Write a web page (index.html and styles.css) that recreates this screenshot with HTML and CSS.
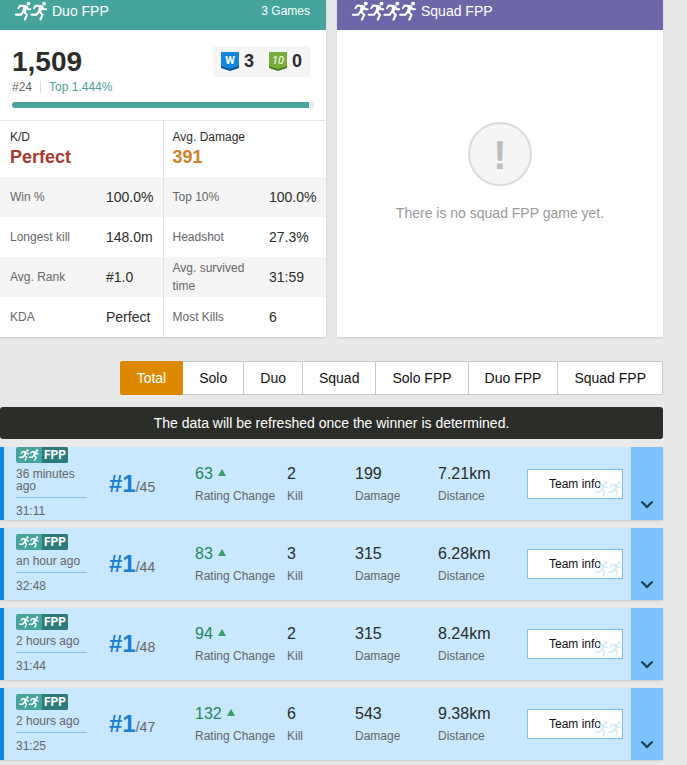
FILE: index.html
```
<!DOCTYPE html>
<html lang="en">
<head>
    <meta charset="UTF-8">
    <meta name="viewport" content="width=device-width, initial-scale=1.0">
    <title>Player stats</title>
    <link rel="stylesheet" href="styles.css">
</head>
<body>
    <!-- Shared icons -->
    <svg class="sprite" aria-hidden="true">
        <symbol id="runner" viewBox="0 0 18 20">
            <circle cx="15" cy="2.4" r="2" fill="currentColor"/>
            <path fill="currentColor" d="M8 4L13.6 4.4L14.2 6.4L12 10.8L11 12.4L8.4 11.4L9.6 6.6Z"/>
            <g fill="none" stroke="currentColor" stroke-linecap="round" stroke-linejoin="round">
                <path stroke-width="1.9" d="M4.5 7.2L6.4 4.4L11.5 4.8"/>
                <path stroke-width="1.9" d="M13.2 5.6L14.4 8.2H17"/>
                <path stroke-width="2.2" d="M9.4 10.8L7.2 13.8H2"/>
                <path stroke-width="2.2" d="M10.4 11L13.4 13.8L11.2 18.8"/>
            </g>
        </symbol>
        <symbol id="duo" viewBox="0 0 35 20">
            <use href="#runner" width="18" height="20"/>
            <use href="#runner" x="16" width="18" height="20"/>
        </symbol>
        <symbol id="squad" viewBox="0 0 67 20">
            <use href="#runner" width="18" height="20"/>
            <use href="#runner" x="16" width="18" height="20"/>
            <use href="#runner" x="32" width="18" height="20"/>
            <use href="#runner" x="48" width="18" height="20"/>
        </symbol>
        <symbol id="arrow" viewBox="0 0 14 10">
            <path d="M1.5 1.5L7 7L12.5 1.5" fill="none" stroke="#24435c" stroke-width="2.4"/>
        </symbol>
    </svg>

    <main class="page">
        <div class="cards">
            <!-- Duo FPP -->
            <section class="card">
                <header class="card-head duo">
                    <svg class="icon-duo" aria-hidden="true"><use href="#duo"/></svg>
                    <span>Duo FPP</span>
                    <span class="games">3 Games</span>
                </header>
                <div class="overview">
                    <div class="rating">
                        <strong class="score">1,509</strong>
                        <div class="medals">
                            <svg class="shield" viewBox="0 0 18 19" role="img" aria-label="Wins">
                                <path fill="#0b4f94" d="M0 10H18V16L9 19L0 16Z"/>
                                <path fill="#1487dd" d="M0 0H18V14L9 17L0 14Z"/>
                                <text class="shield-w" x="9" y="12" text-anchor="middle">W</text>
                            </svg>
                            <b>3</b>
                            <svg class="shield" viewBox="0 0 18 19" role="img" aria-label="Top 10">
                                <path fill="#4d7a20" d="M0 10H18V16L9 19L0 16Z"/>
                                <path fill="#78ac3d" d="M0 0H18V14L9 17L0 14Z"/>
                                <text class="shield-ten" x="9" y="12" text-anchor="middle">10</text>
                            </svg>
                            <b>0</b>
                        </div>
                    </div>
                    <div class="ranking">
                        <span>#24</span>
                        <span class="top">Top 1.444%</span>
                    </div>
                    <div class="bar"><div class="bar-fill" style="width: 98.5%"></div></div>
                </div>
                <table class="stats">
                    <colgroup>
                        <col class="col-label"><col><col class="col-label"><col>
                    </colgroup>
                    <tbody>
                        <tr class="main-stats">
                            <td colspan="2">K/D<strong class="red">Perfect</strong></td>
                            <td colspan="2" class="split">Avg. Damage<strong class="orange">391</strong></td>
                        </tr>
                        <tr>
                            <th>Win %</th><td>100.0%</td>
                            <th class="split">Top 10%</th><td>100.0%</td>
                        </tr>
                        <tr>
                            <th>Longest kill</th><td>148.0m</td>
                            <th class="split">Headshot</th><td>27.3%</td>
                        </tr>
                        <tr>
                            <th>Avg. Rank</th><td>#1.0</td>
                            <th class="split">Avg. survived time</th><td>31:59</td>
                        </tr>
                        <tr>
                            <th>KDA</th><td>Perfect</td>
                            <th class="split">Most Kills</th><td>6</td>
                        </tr>
                    </tbody>
                </table>
            </section>

            <!-- Squad FPP -->
            <section class="card">
                <header class="card-head squad">
                    <svg class="icon-squad" aria-hidden="true"><use href="#squad"/></svg>
                    <span>Squad FPP</span>
                </header>
                <div class="empty">
                    <div class="empty-icon">!</div>
                    <p>There is no squad FPP game yet.</p>
                </div>
            </section>
        </div>

        <nav class="tabs">
            <button type="button" class="active">Total</button>
            <button type="button">Solo</button>
            <button type="button">Duo</button>
            <button type="button">Squad</button>
            <button type="button">Solo FPP</button>
            <button type="button">Duo FPP</button>
            <button type="button">Squad FPP</button>
        </nav>

        <p class="notice">The data will be refreshed once the winner is determined.</p>

        <!-- Match history -->
        <div class="matches">
            <article class="match">
                <div class="when">
                    <div class="mode"><svg aria-hidden="true"><use href="#duo"/></svg><span>FPP</span></div>
                    <div class="ago">36 minutes ago</div>
                    <div class="length">31:11</div>
                </div>
                <div class="rank"><strong>#1</strong>/45</div>
                <div class="stat up"><b>63 <i></i></b>Rating Change</div>
                <div class="stat"><b>2</b>Kill</div>
                <div class="stat"><b>199</b>Damage</div>
                <div class="stat"><b>7.21km</b>Distance</div>
                <button type="button" class="team">Team info<svg aria-hidden="true"><use href="#duo"/></svg></button>
                <button type="button" class="toggle" aria-label="Show details"><svg><use href="#arrow"/></svg></button>
            </article>
            <article class="match">
                <div class="when">
                    <div class="mode"><svg aria-hidden="true"><use href="#duo"/></svg><span>FPP</span></div>
                    <div class="ago">an hour ago</div>
                    <div class="length">32:48</div>
                </div>
                <div class="rank"><strong>#1</strong>/44</div>
                <div class="stat up"><b>83 <i></i></b>Rating Change</div>
                <div class="stat"><b>3</b>Kill</div>
                <div class="stat"><b>315</b>Damage</div>
                <div class="stat"><b>6.28km</b>Distance</div>
                <button type="button" class="team">Team info<svg aria-hidden="true"><use href="#duo"/></svg></button>
                <button type="button" class="toggle" aria-label="Show details"><svg><use href="#arrow"/></svg></button>
            </article>
            <article class="match">
                <div class="when">
                    <div class="mode"><svg aria-hidden="true"><use href="#duo"/></svg><span>FPP</span></div>
                    <div class="ago">2 hours ago</div>
                    <div class="length">31:44</div>
                </div>
                <div class="rank"><strong>#1</strong>/48</div>
                <div class="stat up"><b>94 <i></i></b>Rating Change</div>
                <div class="stat"><b>2</b>Kill</div>
                <div class="stat"><b>315</b>Damage</div>
                <div class="stat"><b>8.24km</b>Distance</div>
                <button type="button" class="team">Team info<svg aria-hidden="true"><use href="#duo"/></svg></button>
                <button type="button" class="toggle" aria-label="Show details"><svg><use href="#arrow"/></svg></button>
            </article>
            <article class="match">
                <div class="when">
                    <div class="mode"><svg aria-hidden="true"><use href="#duo"/></svg><span>FPP</span></div>
                    <div class="ago">2 hours ago</div>
                    <div class="length">31:25</div>
                </div>
                <div class="rank"><strong>#1</strong>/47</div>
                <div class="stat up"><b>132 <i></i></b>Rating Change</div>
                <div class="stat"><b>6</b>Kill</div>
                <div class="stat"><b>543</b>Damage</div>
                <div class="stat"><b>9.38km</b>Distance</div>
                <button type="button" class="team">Team info<svg aria-hidden="true"><use href="#duo"/></svg></button>
                <button type="button" class="toggle" aria-label="Show details"><svg><use href="#arrow"/></svg></button>
            </article>
        </div>
    </main>
</body>
</html>
```

FILE: styles.css
```
* {
    box-sizing: border-box;
}
body {
    margin: 0;
    background: #e9e9e9;
    color: #2b2d29;
    font-family: "Liberation Sans", Arial, sans-serif;
    font-size: 14px;
}
button {
    font: inherit;
    cursor: pointer;
}
.sprite {
    display: block;
    width: 0;
    height: 0;
}
.page {
    margin-right: 24px;
    padding-bottom: 5px;
}

/* Season cards */
.cards {
    display: grid;
    grid-template-columns: 1fr 1fr;
    gap: 11px;
}
.card {
    display: flex;
    flex-direction: column;
    background: #fff;
    box-shadow: 0 1px 2px rgba(0, 0, 0, 0.15);
}
.card-head {
    display: flex;
    align-items: center;
    gap: 4px;
    padding: 0 16px 8px 14px;
    line-height: 22px;
    color: #fff;
}
.duo {
    background: #45a59d;
}
.squad {
    background: #6d67a8;
}
.icon-duo {
    width: 34px;
    height: 20px;
}
.icon-squad {
    width: 66px;
    height: 20px;
}
.games {
    margin-left: auto;
    font-size: 12px;
}
.overview {
    padding: 16px 12px 12px;
    border-bottom: 1px solid #e6e6e6;
}
.rating {
    display: flex;
    align-items: center;
    justify-content: space-between;
    padding-right: 4px;
}
.score {
    font-size: 28px;
    line-height: 31px;
}
.medals {
    display: flex;
    align-items: center;
    gap: 5px;
    padding: 0 8px;
    line-height: 31px;
    background: #f5f5f5;
}
.medals b {
    font-size: 18px;
}
.medals b + .shield {
    margin-left: 10px;
}
.shield {
    width: 18px;
    height: 19px;
    fill: #fff;
}
.shield-w {
    font: bold 11px Roboto, sans-serif;
}
.shield-ten {
    font: italic 11px Roboto, sans-serif;
}
.ranking {
    display: flex;
    align-items: center;
    gap: 8px;
    line-height: 20px;
    font-size: 12px;
    color: #666;
}
.top {
    padding-left: 8px;
    border-left: 1px solid #ddd;
    line-height: 12px;
    color: #4a9f98;
}
.bar {
    height: 6px;
    margin-top: 5px;
    border-radius: 3px;
    background: #e9e9e9;
    overflow: hidden;
}
.bar-fill {
    height: 6px;
    background: #45a59d;
}
.stats {
    width: 100%;
    table-layout: fixed;
    border-collapse: collapse;
}
.col-label {
    width: 106px;
}
.stats th, .stats td {
    height: 40px;
    padding: 0;
    text-align: left;
}
.stats th {
    padding: 0 10px;
    font-size: 12px;
    font-weight: normal;
    line-height: 18px;
    color: #666;
}
.stats tr:nth-child(even) {
    background: #f5f5f5;
}
.stats .main-stats td {
    padding: 8px 10px;
    font-size: 12px;
    line-height: 16px;
}
.stats tr .split, .stats .main-stats .split {
    border-left: 1px solid #e3e3e3;
    padding-left: 9px;
}
.main-stats strong {
    display: block;
    font-size: 18px;
    line-height: 24px;
}
.red {
    color: #a93a2e;
}
.orange {
    color: #d0812c;
}
.empty {
    flex: 1;
    display: flex;
    flex-direction: column;
    align-items: center;
    justify-content: center;
    gap: 16px;
    padding-bottom: 22px;
    color: #999;
}
.empty p {
    margin: 0;
    line-height: 22px;
}
.empty-icon {
    width: 64px;
    height: 64px;
    border: 2px solid #dbdbdb;
    border-radius: 50%;
    background: #f5f5f5;
    color: #bdbdbd;
    font-size: 40px;
    font-weight: bold;
    line-height: 62px;
    text-align: center;
}

/* Mode tabs */
.tabs {
    display: flex;
    justify-content: flex-end;
    margin-top: 24px;
}
.tabs button {
    height: 34px;
    padding: 0 16px;
    border: 1px solid #c8c8c8;
    border-left-width: 0;
    background: #fff;
    color: #111;
}
.tabs .active {
    border: 1px solid #dc8900;
    border-radius: 2px 0 0 2px;
    background: #dc8900;
    color: #fff;
}
.tabs button:last-child {
    border-radius: 0 2px 2px 0;
}
.notice {
    margin: 12px 0 8px;
    border-radius: 3px;
    background: #2b2d29;
    color: #fff;
    line-height: 32px;
    text-align: center;
}

/* Match history */
.matches {
    display: grid;
    gap: 8px;
}
.match {
    display: grid;
    grid-template-columns: 93fr 86fr 92fr 68fr 83fr 89fr 104px 32px;
    align-items: center;
    min-height: 72px;
    padding-left: 12px;
    border-left: 4px solid #0b88e5;
    background: #c9e7ff;
    box-shadow: 0 1px 2px rgba(0, 0, 0, 0.15);
    font-size: 12px;
    color: #666;
}
.when {
    padding: 0 22px 1px 0;
    line-height: 12px;
}
.mode {
    display: flex;
    width: 52px;
    height: 16px;
    border-radius: 2px;
    background: #45a59d;
    color: #fff;
    overflow: hidden;
}
.mode svg {
    width: 26px;
    height: 12px;
    margin-top: 2px;
}
.mode span {
    width: 26px;
    background: #2c7b77;
    font: bold 12px/16px Roboto, sans-serif;
    text-align: center;
}
.ago {
    padding: 5px 0;
    border-bottom: 1px solid #82c1e4;
}
.length {
    padding-top: 5px;
    line-height: 16px;
}
.rank {
    font-size: 14px;
}
.rank strong {
    font-size: 24px;
    color: #1b80d4;
}
.stat {
    line-height: 16px;
    white-space: nowrap;
}
.stat b {
    display: block;
    margin-bottom: 4px;
    font-size: 16px;
    font-weight: normal;
    line-height: 20px;
    color: #2b2d29;
}
.up b {
    color: #24885a;
}
.up i {
    display: inline-block;
    margin: 0 0 3px 1px;
    border: 4px solid transparent;
    border-top: 0;
    border-bottom: 7px solid #34a065;
}
.team {
    position: relative;
    width: 96px;
    height: 30px;
    padding: 0;
    border: 1px solid #82c1e4;
    background: #fff;
    color: #111;
}
.team svg {
    position: absolute;
    right: 0;
    bottom: 1px;
    width: 28px;
    height: 16px;
    color: #d3ebf9;
    opacity: 0.9;
}
.toggle {
    display: flex;
    align-self: stretch;
    align-items: flex-end;
    justify-content: center;
    padding: 0 0 10px;
    border: 0;
    background: #7cc3fd;
}
.toggle svg {
    width: 14px;
    height: 10px;
}
```
